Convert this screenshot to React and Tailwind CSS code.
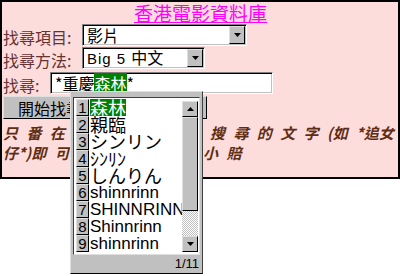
import React from 'react';

const cjk = { fontFamily: '"Noto Sans CJK TC", "Liberation Sans", sans-serif' };

const Field = ({ width, children, arrow }) => (
  <div
    className={`${width} flex h-[22px] items-center bg-white border border-t-[#808080] border-l-[#808080] border-b-white border-r-white shadow-[inset_1px_1px_0_#000,inset_-1px_-1px_0_#c0c0c0]`}
  >
    <div className="flex-1 pl-[4px] text-[16px] leading-[20px] text-black whitespace-nowrap overflow-hidden">
      {children}
    </div>
    {arrow && (
      <div className="mr-[1px] flex h-[18px] w-[16px] items-center justify-center bg-[#c0c0c0] border border-t-[#dfdfdf] border-l-[#dfdfdf] border-b-black border-r-black">
        <svg width="7" height="4" viewBox="0 0 7 4">
          <path d="M0 0h7L3.5 4z" fill="#000" />
        </svg>
      </div>
    )}
  </div>
);

const candidates = [
  { t: '森林', hl: true, cjk: true },
  { t: '親臨', cjk: true },
  { t: 'シンリン', cjk: true },
  { t: 'ｼﾝﾘﾝ', cjk: true },
  { t: 'しんりん', cjk: true },
  { t: 'shinnrinn' },
  { t: 'SHINNRINN' },
  { t: 'Shinnrinn' },
  { t: 'shinnrinn' },
];

const Bevel = ({ className, children }) => (
  <div
    className={`${className} bg-[#c0c0c0] border border-t-[#dfdfdf] border-l-[#dfdfdf] border-b-black border-r-black`}
  >
    {children}
  </div>
);

const CandidateWindow = () => (
  <div className="absolute left-[70px] top-[91px] flex h-[183px] w-[133px] flex-col bg-[#c0c0c0] border border-t-[#dfdfdf] border-l-[#dfdfdf] border-b-black border-r-[#404040] pt-[5px] pl-[2px] pr-[2px]">
    <div className="flex h-[158px] bg-white border border-t-[#404040] border-l-[#404040] border-b-[#dfdfdf] border-r-[#dfdfdf]">
      <div className="flex flex-1 flex-col pt-[1px] pl-[2px] overflow-hidden">
        {candidates.map((c, i) => (
          <div key={i} className="flex h-[17px] items-center">
            <Bevel className="flex h-[17px] w-[13px] shrink-0 items-center justify-center">
              <span className="text-[15px] leading-[15px] text-black" style={{ fontFamily: '"Liberation Sans Narrow", "Liberation Sans", sans-serif' }}>
                {i + 1}
              </span>
            </Bevel>
            <span
              className={`ml-[1px] whitespace-nowrap leading-[17px] ${c.cjk ? 'text-[18px]' : 'text-[17px]'} ${c.hl ? 'bg-[#008000] text-white' : 'text-black'}`}
              style={c.cjk ? { fontFamily: '"Noto Sans CJK JP", sans-serif' } : { fontFamily: '"Liberation Sans", sans-serif' }}
            >
              {c.t}
            </span>
          </div>
        ))}
      </div>
      <div className="mt-[3px] mr-[1px] flex h-[151px] w-[16px] flex-col">
        <Bevel className="flex h-[16px] items-center justify-center">
          <svg width="7" height="4" viewBox="0 0 7 4">
            <path d="M3.5 0L7 4H0z" fill="#000" />
          </svg>
        </Bevel>
        <Bevel className="h-[94px]" />
        <div className="flex-1 bg-[repeating-conic-gradient(#c0c0c0_0_25%,#ffffff_0_50%)] bg-[length:2px_2px]" />
        <Bevel className="flex h-[16px] items-center justify-center">
          <svg width="7" height="4" viewBox="0 0 7 4">
            <path d="M0 0h7L3.5 4z" fill="#000" />
          </svg>
        </Bevel>
      </div>
    </div>
    <div className="flex h-[17px] items-center justify-end pr-[1px] text-[13px] text-black" style={{ fontFamily: '"Liberation Sans", sans-serif' }}>
      1/11
    </div>
  </div>
);

export default function App() {
  return (
    <div className="relative h-[276px] w-[400px] overflow-hidden bg-white" style={cjk}>
      <div className="h-[179px] w-[400px] border-2 border-black bg-[#fddcdc] pl-[1px]">
        <div className="flex justify-center">
          <span className="text-[19px] leading-[21px] text-[#ff00ff] underline underline-offset-[1px]">香港電影資料庫</span>
        </div>

        <div className="mt-[1px] flex h-[22px] items-center">
          <span className="w-[79px] text-[16px] leading-[20px] text-[#663333] pt-[3px]">找尋項目:</span>
          <Field width="w-[165px]" arrow>影片</Field>
        </div>

        <div className="mt-[1px] flex h-[22px] items-center">
          <span className="w-[79px] text-[16px] leading-[20px] text-[#663333] pt-[3px]">找尋方法:</span>
          <Field width="w-[123px]" arrow>
            <span style={{ fontFamily: '"Liberation Sans", sans-serif' }} className="text-[15px] tracking-[1px]">Big 5 </span>中文
          </Field>
        </div>

        <div className="mt-[3px] flex h-[22px] items-center">
          <span className="w-[47px] text-[16px] leading-[20px] text-[#663333] pt-[3px]">找尋:</span>
          <Field width="w-[223px]">
            *重慶<span className="bg-[#008000] text-white">森林</span>*
          </Field>
        </div>

        <div className="mt-[2px] flex h-[23px] w-[204px] items-center bg-[#c0c0c0] border border-t-[#dfdfdf] border-l-[#dfdfdf] border-b-black border-r-black pl-[14px]">
          <span className="text-[16px] leading-[20px] text-black">開始找尋</span>
        </div>

        <div className="mt-[4px] text-[15px] font-bold italic leading-[20px] text-[#5e2e14] whitespace-nowrap [word-spacing:5px]">
          <div className="flex">
            <span className="w-[207px]">只 番 在</span>
            <span>搜 尋 的 文 字 (如 *追女</span>
          </div>
          <div className="flex">
            <span className="w-[200px]">仔*)即 可</span>
            <span>小 賠</span>
          </div>
        </div>
      </div>

      <CandidateWindow />
    </div>
  );
}
